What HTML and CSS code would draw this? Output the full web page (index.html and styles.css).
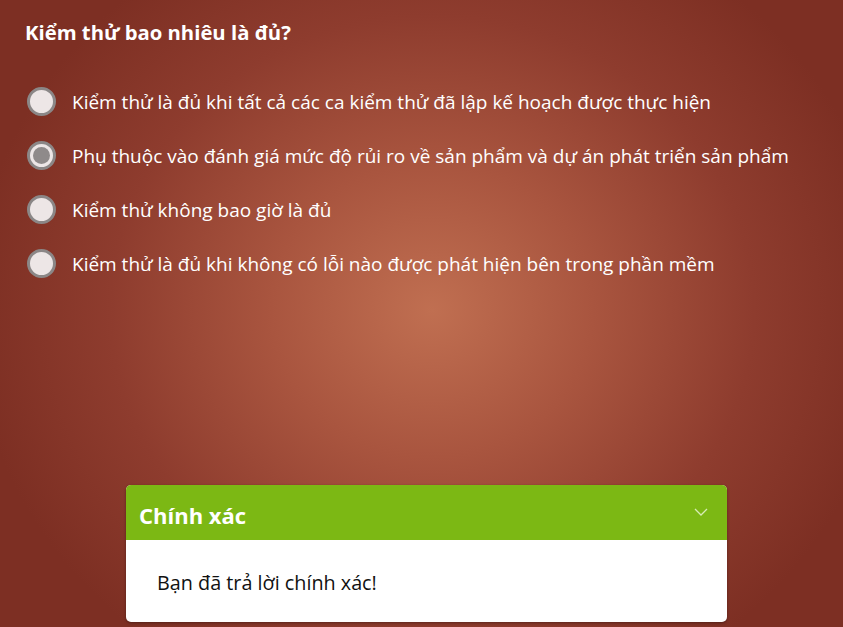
FILE: index.html
```html
<!DOCTYPE html>
<html lang="vi">
<head>
<meta charset="utf-8">
<link rel="stylesheet" href="styles.css">
</head>
<body>
<div class="stage">
  <h1 class="question">Kiểm thử bao nhiêu là đủ?</h1>
  <ul class="options">
    <li class="option"><span class="radio"></span><span class="label">Kiểm thử là đủ khi tất cả các ca kiểm thử đã lập kế hoạch được thực hiện</span></li>
    <li class="option"><span class="radio checked"></span><span class="label">Phụ thuộc vào đánh giá mức độ rủi ro về sản phẩm và dự án phát triển sản phẩm</span></li>
    <li class="option"><span class="radio"></span><span class="label">Kiểm thử không bao giờ là đủ</span></li>
    <li class="option"><span class="radio"></span><span class="label">Kiểm thử là đủ khi không có lỗi nào được phát hiện bên trong phần mềm</span></li>
  </ul>
  <div class="feedback">
    <div class="fb-head">
      <span class="fb-title">Chính xác</span>
      <svg class="chev" width="14" height="8" viewBox="0 0 14 8"><path d="M1 1 L7 7 L13 1" fill="none" stroke="#d8ecb4" stroke-width="1.3"/></svg>
    </div>
    <div class="fb-body">Bạn đã trả lời chính xác!</div>
  </div>
</div>
</body>
</html>
```
FILE: styles.css
```css
html, body { margin: 0; padding: 0; }
body {
  width: 843px;
  height: 627px;
  overflow: hidden;
  background: radial-gradient(ellipse 460px 420px at 432px 310px, #c06f51 0%, #a9553f 35%, #8e3c2e 70%, #7d2f23 100%);
  font-family: "Open Sans", sans-serif;
}
.stage {
  height: 627px;
  display: flex;
  flex-direction: column;
}
.question {
  margin: 18px 0 0 25px;
  font-family: "Open Sans", sans-serif;
  font-size: 20.3px;
  font-weight: 700;
  color: #ffffff;
  line-height: 28px;
  letter-spacing: 0;
}
.options {
  list-style: none;
  margin: 41px 0 0 0;
  padding: 0 0 0 27px;
  display: flex;
  flex-direction: column;
  gap: 25px;
}
.option {
  display: flex;
  align-items: center;
  height: 29px;
  gap: 16px;
}
.radio {
  box-sizing: border-box;
  width: 29px;
  height: 29px;
  border-radius: 50%;
  border: 3px solid #8b8787;
  background: #ede6e6;
  flex: none;
  position: relative;
}
.radio.checked::after {
  content: "";
  position: absolute;
  left: 3px; top: 3px;
  width: 17px; height: 17px;
  border-radius: 50%;
  background: #8f8a8a;
}
.label {
  font-family: "Open Sans", sans-serif;
  font-size: 19px;
  color: #ffffff;
  letter-spacing: 0;
  white-space: nowrap;
}
.feedback {
  margin: auto 0 5px 126px;
  width: 601px;
  border-radius: 5px;
  overflow: hidden;
  box-shadow: 0 1px 3px rgba(0,0,0,0.35);
  background: #ffffff;
}
.fb-head {
  height: 55px;
  background: #7cb814;
  display: flex;
  align-items: center;
  justify-content: space-between;
  padding: 0 19px 0 13px;
}
.fb-title {
  font-family: "Open Sans", sans-serif;
  font-weight: 700;
  font-size: 22px;
  color: #ffffff;
  margin-top: 4px;
}
.chev { margin-top: -2px; }
.fb-body {
  height: 82px;
  box-sizing: border-box;
  padding: 29px 0 0 31px;
  font-family: "Open Sans", sans-serif;
  font-size: 19.8px;
  color: #111111;
}
```
